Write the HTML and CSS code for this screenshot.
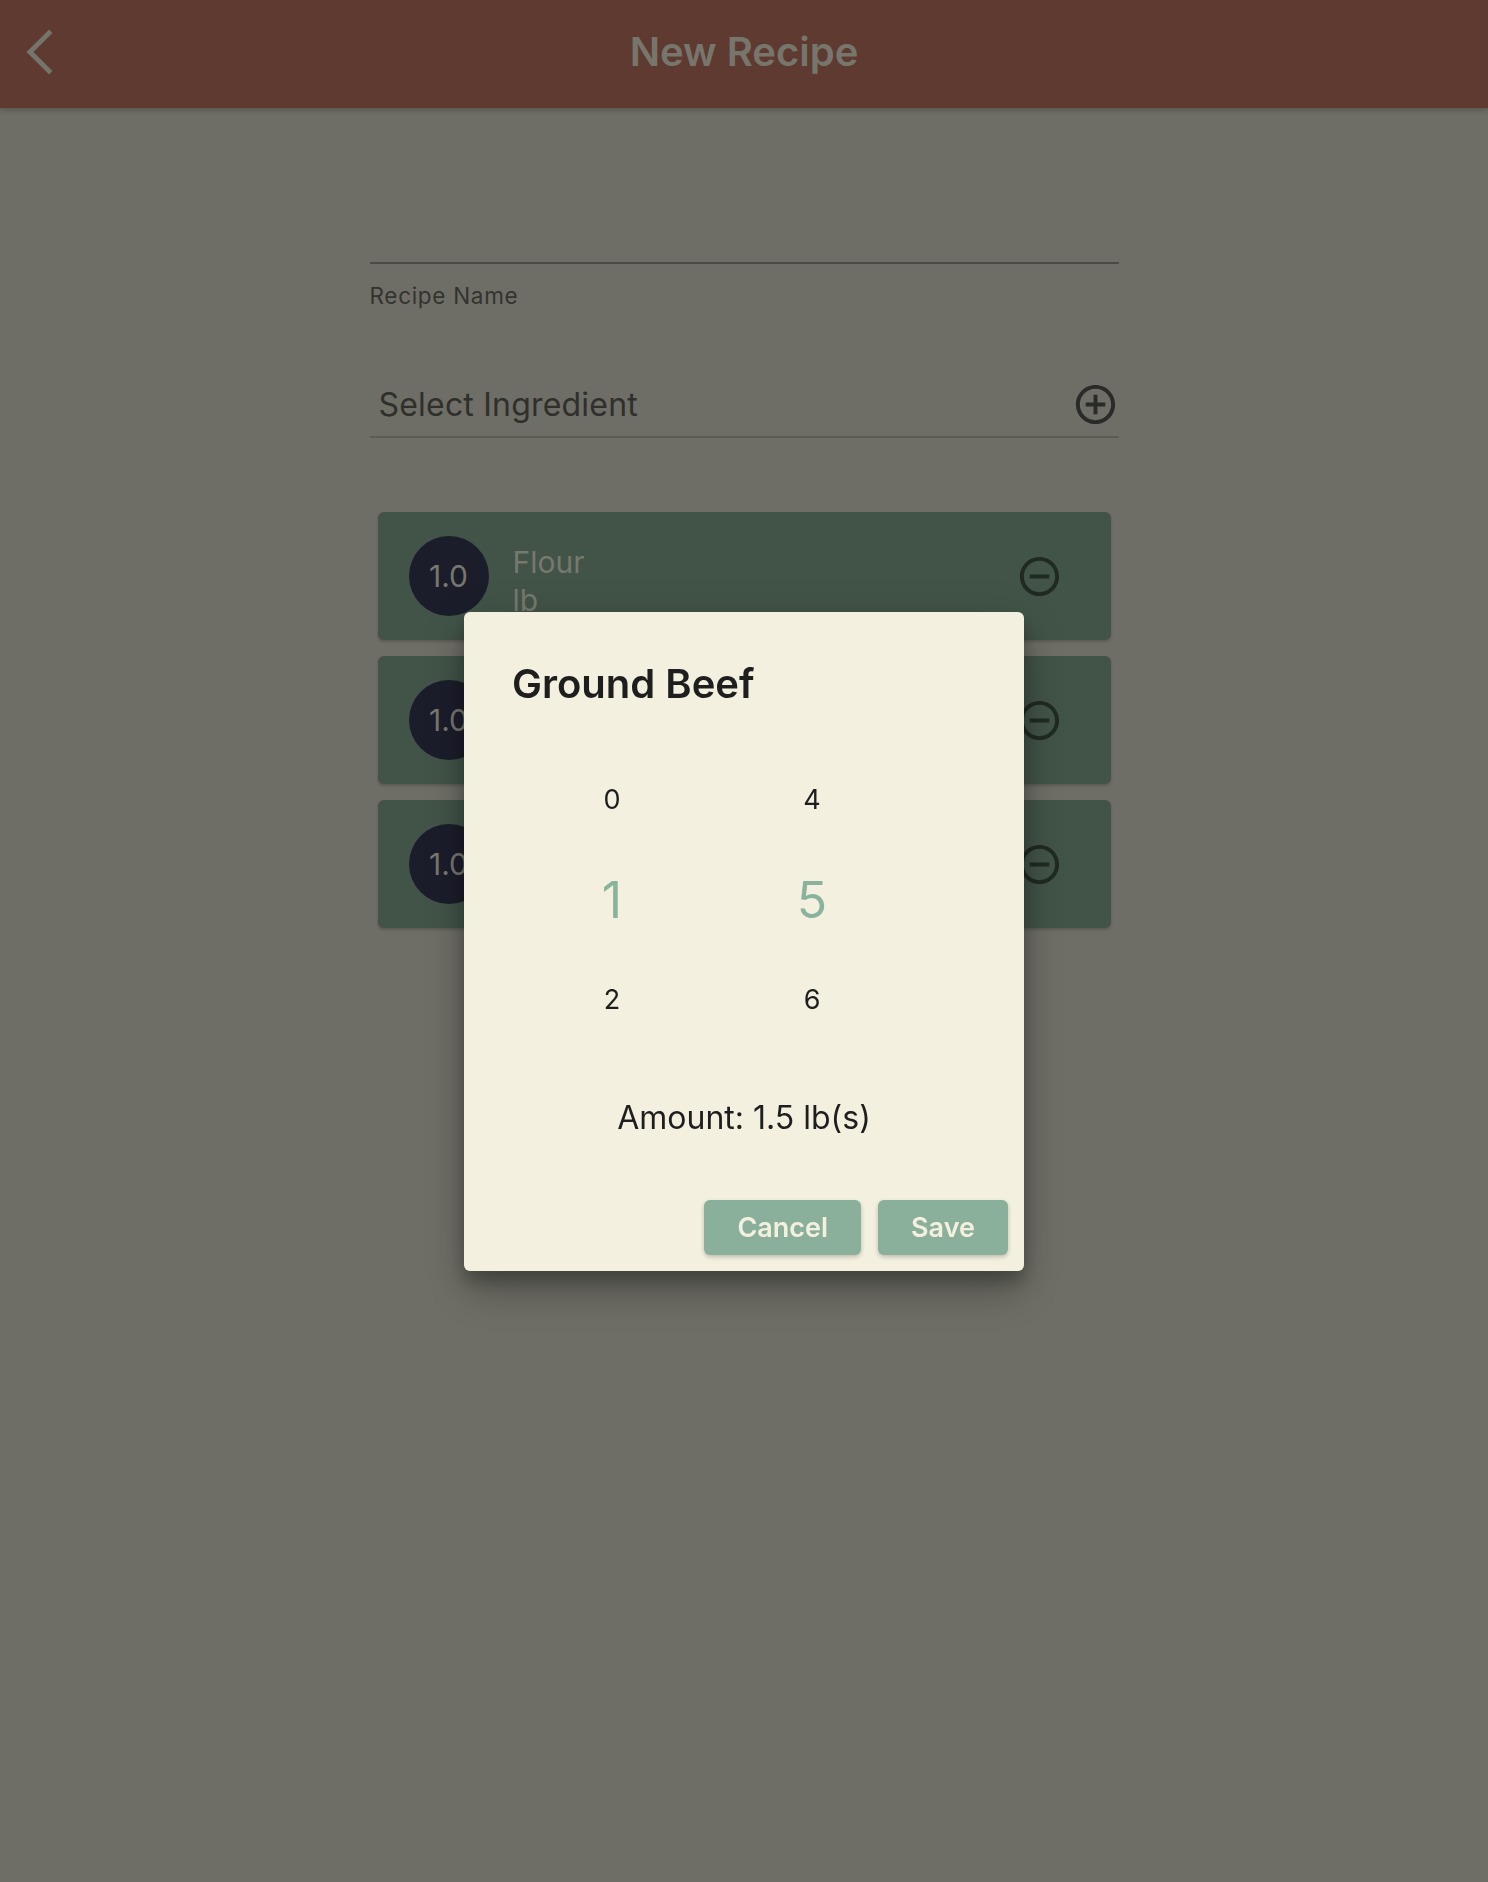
FILE: index.html
```html
<!DOCTYPE html>
<html lang="en">
<head>
<meta charset="utf-8">
<title>New Recipe</title>
<link rel="stylesheet" href="styles.css">
</head>
<body>
<header class="app-bar">
  <button class="back-btn" aria-label="Back">
    <svg viewBox="0 0 30 46" width="30" height="46"><polyline points="25,4 6,23 25,42" fill="none" stroke="currentColor" stroke-width="5" stroke-linecap="square"/></svg>
  </button>
  <h1 class="app-title">New Recipe</h1>
</header>

<main class="content">
  <div class="name-field">
    <div class="name-input"></div>
    <label class="name-label">Recipe Name</label>
  </div>

  <div class="select-row">
    <span class="select-text">Select Ingredient</span>
    <svg class="icon-add" viewBox="0 0 24 24" width="47" height="47"><path fill="currentColor" d="M13 7h-2v4H7v2h4v4h2v-4h4v-2h-4V7zm-1-5C6.48 2 2 6.48 2 12s4.48 10 10 10 10-4.48 10-10S17.52 2 12 2zm0 18c-4.41 0-8-3.59-8-8s3.59-8 8-8 8 3.59 8 8-3.59 8-8 8z"/></svg>
  </div>

  <ul class="ingredient-list">
    <li class="ingredient-card">
      <div class="amount-avatar">1.0</div>
      <div class="ingredient-text">
        <div class="ingredient-name">Flour</div>
        <div class="ingredient-unit">lb</div>
      </div>
      <svg class="icon-remove" viewBox="0 0 24 24" width="47" height="47"><path fill="currentColor" d="M7 11v2h10v-2H7zm5-9C6.48 2 2 6.48 2 12s4.48 10 10 10 10-4.48 10-10S17.52 2 12 2zm0 18c-4.41 0-8-3.59-8-8s3.59-8 8-8 8 3.59 8 8-3.59 8-8 8z"/></svg>
    </li>
    <li class="ingredient-card">
      <div class="amount-avatar">1.0</div>
      <div class="ingredient-text">
        <div class="ingredient-name">Ground Beef</div>
        <div class="ingredient-unit">lb</div>
      </div>
      <svg class="icon-remove" viewBox="0 0 24 24" width="47" height="47"><path fill="currentColor" d="M7 11v2h10v-2H7zm5-9C6.48 2 2 6.48 2 12s4.48 10 10 10 10-4.48 10-10S17.52 2 12 2zm0 18c-4.41 0-8-3.59-8-8s3.59-8 8-8 8 3.59 8 8-3.59 8-8 8z"/></svg>
    </li>
    <li class="ingredient-card">
      <div class="amount-avatar">1.0</div>
      <div class="ingredient-text">
        <div class="ingredient-name">Milk</div>
        <div class="ingredient-unit">lb</div>
      </div>
      <svg class="icon-remove" viewBox="0 0 24 24" width="47" height="47"><path fill="currentColor" d="M7 11v2h10v-2H7zm5-9C6.48 2 2 6.48 2 12s4.48 10 10 10 10-4.48 10-10S17.52 2 12 2zm0 18c-4.41 0-8-3.59-8-8s3.59-8 8-8 8 3.59 8 8-3.59 8-8 8z"/></svg>
    </li>
  </ul>
</main>

<div class="scrim">
  <div class="dialog" role="dialog">
    <h2 class="dialog-title">Ground Beef</h2>
    <div class="picker">
      <div class="picker-col">
        <div class="picker-item">0</div>
        <div class="picker-item selected">1</div>
        <div class="picker-item">2</div>
      </div>
      <div class="picker-col">
        <div class="picker-item">4</div>
        <div class="picker-item selected">5</div>
        <div class="picker-item">6</div>
      </div>
    </div>
    <p class="amount">Amount: 1.5 lb(s)</p>
    <div class="dialog-actions">
      <button class="btn">Cancel</button>
      <button class="btn">Save</button>
    </div>
  </div>
</div>
</body>
</html>
```

FILE: styles.css
```css
* { box-sizing: border-box; }

html, body {
  margin: 0;
  padding: 0;
}

body {
  min-height: 100vh;
  background: #6e6e66;
  font-family: "Inter", "Noto Sans", sans-serif;
  color: #2e2e2b;
}

.app-bar {
  position: relative;
  height: 108px;
  background: #5f3a30;
  display: flex;
  align-items: center;
  justify-content: center;
  padding-bottom: 4px;
  box-shadow: 0 2px 5px rgba(0, 0, 0, 0.22);
}

.back-btn {
  position: absolute;
  left: 24px;
  top: 29px;
  width: 30px;
  height: 46px;
  padding: 0;
  border: 0;
  background: none;
  color: #74746b;
  display: flex;
}

.app-title {
  margin: 0;
  font-size: 40px;
  line-height: 48px;
  font-weight: 600;
  color: #76766d;
}

.content {
  width: 749px;
  margin: 0 auto;
}

.name-field {
  padding-top: 154px;
}

.name-input {
  height: 2px;
  background: #4a4a46;
}

.name-label {
  display: block;
  margin-top: 18px;
  font-size: 22.5px;
  line-height: 28px;
  color: #333330;
  letter-spacing: 0.7px;
}

.select-row {
  margin-top: 58px;
  display: flex;
  align-items: center;
  justify-content: space-between;
  height: 70px;
  padding: 5px 0 0 9px;
  border-bottom: 2px solid #5c5c57;
}

.select-text {
  font-size: 32px;
  line-height: 40px;
  letter-spacing: 0.2px;
  color: #2f2f2c;
}

.icon-add {
  display: block;
  color: #2a2a28;
}

.ingredient-list {
  list-style: none;
  margin: 74px 8px 0;
  padding: 0;
  display: flex;
  flex-direction: column;
  gap: 16px;
}

.ingredient-card {
  height: 128px;
  background: #425347;
  border-radius: 6px;
  box-shadow: 0 2px 3px rgba(0, 0, 0, 0.18);
  display: flex;
  align-items: center;
  padding: 0 48px 0 31px;
}

.amount-avatar {
  width: 80px;
  height: 80px;
  border-radius: 50%;
  background: #1c1d2b;
  color: #77776e;
  font-size: 30px;
  display: flex;
  align-items: center;
  justify-content: center;
  flex-shrink: 0;
}

.ingredient-text {
  flex: 1;
  margin-left: 24px;
  padding-top: 10px;
  color: #77786e;
  font-size: 30px;
}

.ingredient-name {
  line-height: 38px;
}

.ingredient-unit {
  line-height: 38px;
}

.icon-remove {
  display: block;
  color: #1f2a22;
  flex-shrink: 0;
}

.scrim {
  position: fixed;
  inset: 0;
  display: flex;
  align-items: center;
  justify-content: center;
}

.dialog {
  width: 560px;
  height: 659px;
  background: #f3f0e0;
  border-radius: 6px;
  padding: 48px 16px 16px 48px;
  display: flex;
  flex-direction: column;
  box-shadow: 0 24px 38px rgba(0, 0, 0, 0.16), 0 9px 46px rgba(0, 0, 0, 0.14), 0 11px 15px rgba(0, 0, 0, 0.22);
  color: #1e1e1e;
}

.dialog-title {
  margin: 0;
  font-size: 40px;
  line-height: 48px;
  font-weight: 600;
}

.picker {
  margin-top: 42px;
  display: flex;
}

.picker-col {
  width: 200px;
  display: flex;
  flex-direction: column;
  align-items: center;
}

.picker-item {
  height: 100px;
  display: flex;
  align-items: center;
  justify-content: center;
  font-size: 27px;
}

.picker-item.selected {
  font-size: 50px;
  color: #8ab39e;
}

.amount {
  margin: 48px 32px 0 0;
  text-align: center;
  font-size: 32px;
  line-height: 40px;
}

.dialog-actions {
  margin-top: auto;
  display: flex;
  justify-content: flex-end;
  gap: 17px;
}

.btn {
  height: 55px;
  padding: 0 33px;
  border: 0;
  border-radius: 6px;
  background: #8ab09b;
  color: #f3f0e0;
  font-family: inherit;
  font-size: 27px;
  font-weight: 600;
  box-shadow: 0 2px 4px rgba(0, 0, 0, 0.22);
}
```
